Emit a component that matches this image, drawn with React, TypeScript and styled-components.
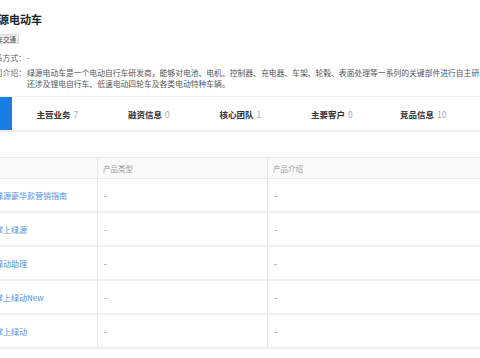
import React from "react";
import styled, { createGlobalStyle } from "styled-components";

const GlobalStyle = createGlobalStyle`
  html, body { margin: 0; padding: 0; background: #fff; }
  body { font-family: "Noto Sans CJK SC", "Noto Sans", sans-serif; overflow: hidden; }
`;

const Viewport = styled.div`
  width: 480px;
  height: 358px;
  overflow: hidden;
  background: #fff;
`;

const Info = styled.section`
  margin-left: -13px;
  padding-top: 11px;
  width: 760px;
`;

const Title = styled.h1`
  margin: 0;
  font-size: 11px;
  line-height: 16px;
  font-weight: 700;
  color: #222;
`;

const Tag = styled.span`
  display: block;
  width: fit-content;
  margin-top: 7px;
  padding: 0 2px;
  font-size: 6.5px;
  line-height: 8px;
  color: #555;
  background: #eee;
  border: 1px solid #ddd;
`;

const InfoRow = styled.div<{ $gap: number }>`
  display: flex;
  margin-top: ${(p) => p.$gap}px;
  font-size: 7.8px;
  line-height: 11px;
  color: #555;
`;

const Label = styled.span`
  flex: 0 0 40px;
  color: #666;
`;

const Value = styled.div`
  white-space: nowrap;
`;

const TabBar = styled.nav`
  display: flex;
  margin-top: 7px;
  margin-left: -80px;
  height: 33px;
  border-top: 1px solid #f0f0f0;
  border-bottom: 2px solid #eee;
`;

const Tab = styled.div<{ $active?: boolean }>`
  flex: 0 0 91.5px;
  display: flex;
  align-items: center;
  justify-content: center;
  gap: 3px;
  font-size: 8.5px;
  font-weight: 700;
  color: ${(p) => (p.$active ? "#fff" : "#333")};
  background: ${(p) => (p.$active ? "#1a7de6" : "transparent")};
  white-space: nowrap;
`;

const Count = styled.span`
  font-weight: 400;
  color: #aaa;
`;

const Table = styled.div`
  margin-top: 25px;
  margin-left: -13px;
  display: grid;
  grid-template-columns: 110px 170px 300px;
`;

const HeadCell = styled.div<{ $first?: boolean }>`
  height: 20px;
  display: flex;
  align-items: center;
  padding-left: ${(p) => (p.$first ? 8 : 5)}px;
  font-size: 7.5px;
  color: #999;
  background: #fafafa;
  border-top: 1px solid #e8e8e8;
  border-bottom: 1px solid #e8e8e8;
  border-left: ${(p) => (p.$first ? "none" : "1px solid #e8e8e8")};
`;

const Cell = styled.div<{ $first?: boolean }>`
  height: 32px;
  display: flex;
  align-items: center;
  padding-left: ${(p) => (p.$first ? 8 : 6)}px;
  font-size: 8px;
  color: ${(p) => (p.$first ? "#4f92dc" : "#666")};
  border-bottom: 2px solid #f0f0f0;
  border-left: ${(p) => (p.$first ? "none" : "1px solid #e8e8e8")};
  white-space: nowrap;
`;

const tabs = [
  { name: "基本信息", count: "", active: true },
  { name: "主营业务", count: "7" },
  { name: "融资信息", count: "0" },
  { name: "核心团队", count: "1" },
  { name: "主要客户", count: "0" },
  { name: "竞品信息", count: "10" },
];

const products = ["绿源豪华款营销指南", "掌上绿源", "绿动助理", "掌上绿动New", "掌上绿动"];

export default function App() {
  return (
    <Viewport>
      <GlobalStyle />
      <Info>
        <Title>绿源电动车</Title>
        <Tag>汽车交通</Tag>
        <InfoRow $gap={8}>
          <Label>联系方式：</Label>
          <Value>-</Value>
        </InfoRow>
        <InfoRow $gap={4}>
          <Label>公司介绍：</Label>
          <Value>
            <div>绿源电动车是一个电动自行车研发商，能够对电池、电机、控制器、充电器、车架、轮毂、表面处理等一系列的关键部件进行自主研发，</div>
            <div>还涉及锂电自行车、低速电动四轮车及各类电动特种车辆。</div>
          </Value>
        </InfoRow>
      </Info>
      <TabBar>
        {tabs.map((t) => (
          <Tab key={t.name} $active={t.active}>
            {t.name}
            {t.count && <Count>{t.count}</Count>}
          </Tab>
        ))}
      </TabBar>
      <Table>
        <HeadCell $first />
        <HeadCell>产品类型</HeadCell>
        <HeadCell>产品介绍</HeadCell>
        {products.map((p) => (
          <React.Fragment key={p}>
            <Cell $first>{p}</Cell>
            <Cell>-</Cell>
            <Cell>-</Cell>
          </React.Fragment>
        ))}
      </Table>
    </Viewport>
  );
}
